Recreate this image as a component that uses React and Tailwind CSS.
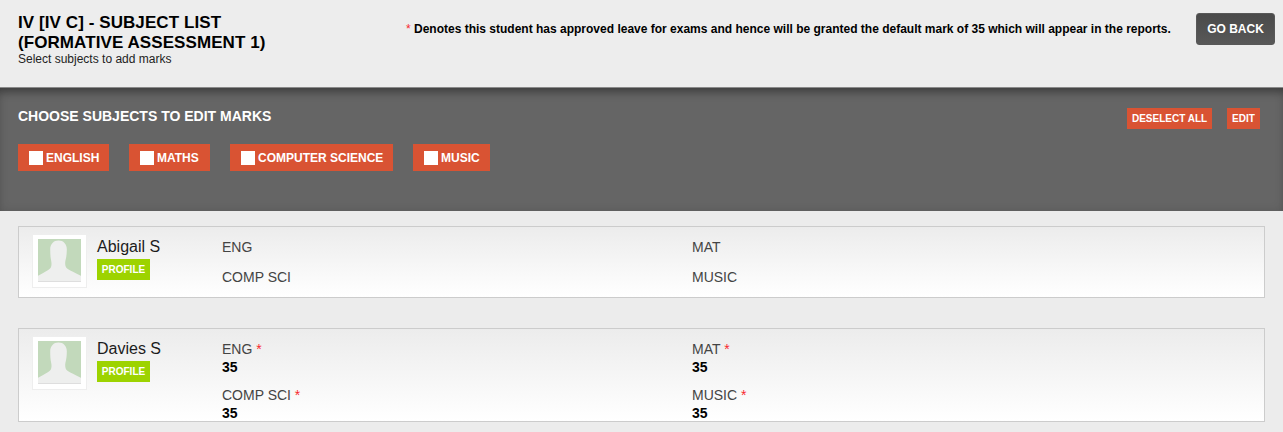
const F = "font-['Liberation_Sans',Arial,sans-serif]";

function Avatar() {
  return (
    <div className="w-[55px] h-[54px] shrink-0 bg-white border border-[#eeeeee] pl-[5px] pt-[4px]">
      <svg viewBox="0 0 44 44" className="block w-[43px] h-[43px] overflow-hidden">
        <rect width="44" height="44" fill="#c2d9bb" />
        <path
          className="blur-[0.6px]"
          d="M21 1.5C16 1.5 12.5 5 12.5 10.5C12.5 15 12.7 19 13.5 22.5C14 25 14 27.5 13 29.5C11 32.5 5 34.5 -2 39V46H46V39C39 34.5 31.5 32.5 29 29.5C27.8 27.5 27.6 25 28 22.5C29 19 29.5 15 29.5 10.5C29.5 5 26 1.5 21 1.5Z"
          fill="#eeefee"
        />
        <rect y="43" width="44" height="1" fill="#dedede" />
      </svg>
    </div>
  );
}

function Star() {
  return <span className="text-[#f8282f]"> *</span>;
}

function Subject({ label, mark }) {
  return (
    <div>
      <div className="text-[14px] leading-[16px] text-[#444444]">
        {label}
        {mark && <Star />}
      </div>
      {mark && <div className="text-[14px] leading-[16px] font-bold text-black mt-[2px]">{mark}</div>}
    </div>
  );
}

function Student({ name, marks, className, gapRow }) {
  const subjects = ["ENG", "MAT", "COMP SCI", "MUSIC"];
  return (
    <div className={`mx-[18px] border border-[#cccccc] bg-gradient-to-b from-[#ececec] to-white flex overflow-hidden ${className}`}>
      <div className="pl-[13px] pt-[7px] w-[78px] shrink-0">
        <Avatar />
      </div>
      <div className="w-[125px] shrink-0 pt-[11px]">
        <div className="text-[16px] leading-[18px] text-[#1c1c1c]">{name}</div>
        <div className="mt-[3px] w-[53px] h-[21px] bg-[#9dd300] text-white text-[10px] font-bold flex items-center justify-center">PROFILE</div>
      </div>
      <div className={`grid grid-cols-[470px_1fr] pt-[12px] flex-1 ${gapRow}`}>
        {subjects.map((s) => (
          <Subject key={s} label={s} mark={marks} />
        ))}
      </div>
    </div>
  );
}

function Chip({ label, width }) {
  return (
    <div className={`h-[27px] bg-[#d95333] flex items-center pl-[11px] gap-[3px] text-white text-[12px] font-bold whitespace-nowrap ${width}`}>
      <span className="w-[14px] h-[14px] bg-white" />
      {label}
    </div>
  );
}

export default function App() {
  return (
    <div className={`${F} bg-[#ececec] w-[1283px] h-[432px] overflow-hidden`}>
      <header className="h-[88px] flex bg-[#ededed] border-b border-[#8a8a8a]">
        <div className="w-[406px] pl-[18px] pt-[13px] shrink-0">
          <h1 className="text-[17px] leading-[20px] font-bold text-black whitespace-nowrap tracking-[0.08px]">
            IV [IV C] - SUBJECT LIST
            <br />
            (FORMATIVE ASSESSMENT 1)
          </h1>
          <p className="text-[12px] leading-[13px] text-[#222222]">Select subjects to add marks</p>
        </div>
        <p className="w-[772px] pt-[21px] text-[12px] leading-[16px] font-bold text-black shrink-0 whitespace-nowrap">
          <span className="text-[#f8282f] font-normal">* </span>
          Denotes this student has approved leave for exams and hence will be granted the default mark of 35 which will appear in the reports.
        </p>
        <div className="pt-[13px] pl-[18px]">
          <button className="w-[79px] h-[32px] rounded-[3px] border border-[#585858] bg-gradient-to-b from-[#4a4a4a] to-[#585858] text-white text-[12px] font-bold">
            GO BACK
          </button>
        </div>
      </header>
      <section className="h-[123px] bg-[#656565] shadow-[inset_0_10px_10px_-6px_rgba(0,0,0,0.35),inset_0_0_10px_rgba(0,0,0,0.12)] px-[18px] pt-[20px]">
        <div className="flex justify-between items-start h-[36px]">
          <h2 className="text-[14px] leading-[16px] font-bold text-white">CHOOSE SUBJECTS TO EDIT MARKS</h2>
          <div className="flex gap-[15px] pr-[5px]">
            <div className="w-[85px] h-[21px] bg-[#d95333] text-white text-[10px] font-bold flex items-center justify-center">DESELECT ALL</div>
            <div className="w-[33px] h-[21px] bg-[#d95333] text-white text-[10px] font-bold flex items-center justify-center">EDIT</div>
          </div>
        </div>
        <div className="flex gap-[20px]">
          <Chip label="ENGLISH" width="w-[91px]" />
          <Chip label="MATHS" width="w-[81px]" />
          <Chip label="COMPUTER SCIENCE" width="w-[163px]" />
          <Chip label="MUSIC" width="w-[77px]" />
        </div>
      </section>
      <Student name="Abigail S" className="mt-[15px] h-[72px]" gapRow="gap-y-[14px] content-start" />
      <Student name="Davies S" marks="35" className="mt-[30px] h-[94px]" gapRow="gap-y-[12px] content-start" />
    </div>
  );
}
